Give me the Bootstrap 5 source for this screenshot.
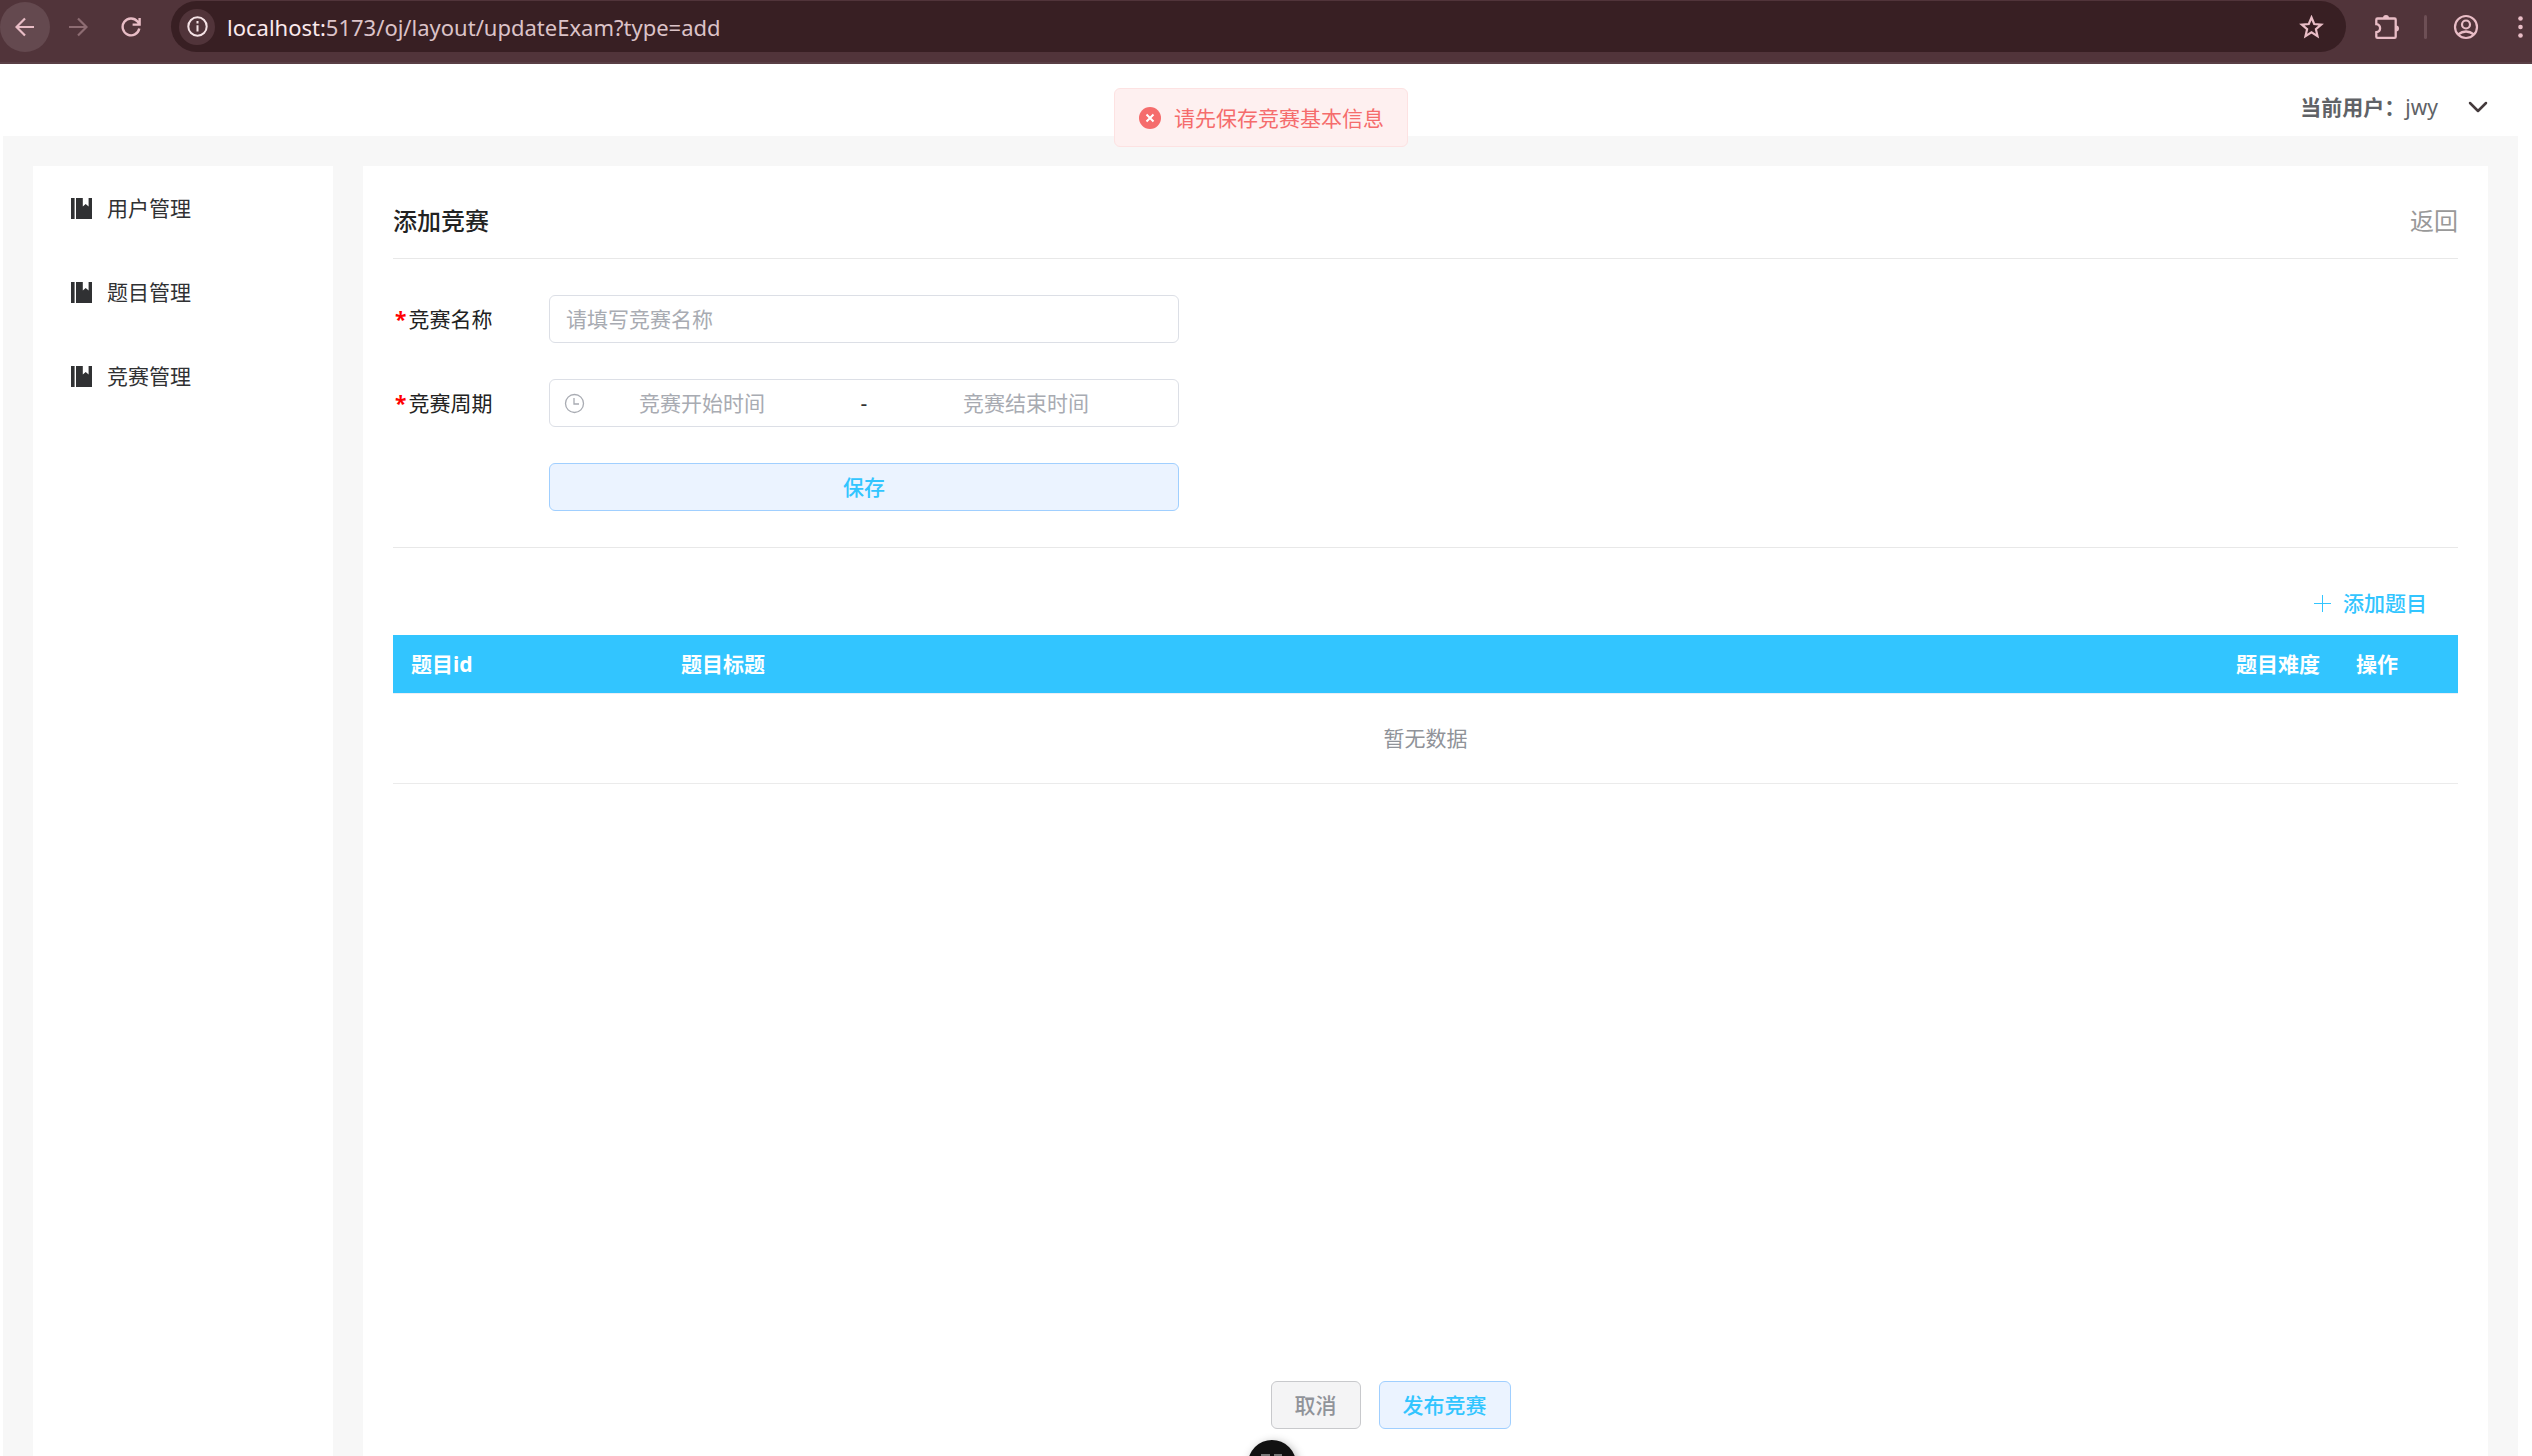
<!DOCTYPE html>
<html lang="zh-CN">
<head>
<meta charset="utf-8">
<title>添加竞赛</title>
<meta name="viewport" content="width=device-width, initial-scale=1">
<link href="https://cdn.jsdelivr.net/npm/bootstrap@5.3.0/dist/css/bootstrap.min.css" rel="stylesheet">
<style>
body{font-family:"Noto Sans","Noto Sans CJK SC",sans-serif;font-size:21px;line-height:30px;color:#222;background:#fff}
svg{display:block;flex:none}
.chrome-bar{height:64px;padding:2px 0 11px;background:#51343a;border-bottom:2px solid #593f45;color:#e9bdc6}
.chrome-nav{gap:3px;padding-right:15px}
.chrome-btn{width:50px;height:50px;border:0;border-radius:50%;background:none;color:inherit;padding:0}
.chrome-btn.active-nav{background:#64494f}
.chrome-btn:disabled{color:#8d6c72}
.chrome-tools{padding:0 9px 0 28px}
.tool-profile{margin:0 39px 0 26px}
.url-pill{height:51px;border-radius:26px;background:#381f23;padding:0 22px 0 8px}
.info-dot{width:36px;height:36px;border-radius:50%;background:#51343a;color:#f5e3e6}
.url-text{color:#fbe9ec;font-size:22px}
.url-text span{color:#dcc3c8}
.split{width:3px;height:24px;border-radius:2px;background:#6d4f55}
.top-header{height:72px;padding:14px 40px 0 0}
.user-menu{border:0;background:none;color:#606266;padding:0;height:58px}
.workspace{background:#f7f7f7;margin:0 14px 0 3px;padding:30px 30px 0;gap:30px}
.side-nav{width:300px}
.side-nav a{height:84px;padding-left:38px;gap:15px;color:#303133}
.panel-main{padding:30px 30px 27px}
.panel-head{height:63px;padding-bottom:13px;font-size:24px;line-height:36px;border-bottom:1px solid #e8e8e8}
.panel-head h1{font-size:24px;line-height:36px}
.panel-head a{color:#999}
.exam-form{padding:36px 0;row-gap:36px;border-bottom:1px solid #e8e8e8}
.field-label{width:156px}
.field-label span{color:#f00;font-weight:700;margin:0 2px}
.field-box{width:630px;height:48px;border:1px solid #dcdfe6;border-radius:6px;font-size:21px;color:#606266}
input.field-box{padding:0 16px}
.field-box input{border:0;background:none;text-align:center;width:234px;padding:0}
input::placeholder{color:#a8abb2;opacity:1}
.range-box{padding:0 0 0 14px;color:#303133}
.range-end{width:35px}
.tone-btn{height:48px;border:1px solid #a0cfff;border-radius:6px;background:#ebf3ff;color:#32c5ff;font-weight:500;font-size:21px;line-height:30px;padding:8px 23px}
.tone-btn.grey{background:#f4f4f5;border-color:#c8c9cc;color:#909399}
.field-save{width:630px}
.add-row{padding:31px 0 8px}
.add-link{border:0;background:none;color:#32c5ff;font-weight:500;padding:0 31px 0 0;height:48px;gap:12px}
.q-table{table-layout:fixed;width:100%}
.q-table th{height:58px;padding:0 18px;background:#32c5ff;color:#fff;font-weight:700}
.q-table td{height:90px;text-align:center;color:#909399;border-top:1px solid #ebeef5;border-bottom:1px solid #ebebeb}
.c-id{width:270px}
.c-lv{width:120px}
.foot-actions{gap:18px;padding-right:70px}
.toast-msg{left:50%;top:88px;transform:translateX(-50%);height:59px;margin-left:-5px;padding:0 23px 0 24px;background:#fef0f0;border:1px solid #fde2e2;border-radius:6px;color:#f56c6c;gap:13px;white-space:nowrap}
.float-dot{left:50%;top:1440px;margin-left:-18px;width:48px;height:48px;border-radius:50%;background:#111;box-shadow:2px 2px 10px rgba(0,0,0,.3)}
</style>
<script src="https://cdn.jsdelivr.net/npm/bootstrap@5.3.0/dist/js/bootstrap.bundle.min.js"></script>
</head>
<body class="vh-100 overflow-hidden d-flex flex-column position-relative">
<svg class="d-none"><symbol id="book" viewBox="0 0 21 21"><path fill="currentColor" d="M0 0h3.600v21H0zM5 0h6.800v8.500l2.900-2.500 2.900 2.500V0H21v21H5z"/></symbol></svg>

<header class="chrome-bar d-flex align-items-center flex-shrink-0">
  <div class="chrome-nav d-flex">
    <button class="chrome-btn active-nav d-grid" aria-label="后退"><svg class="m-auto" width="20" height="20" viewBox="0 0 20 20" fill="none" stroke="currentColor" stroke-width="2.200"><path d="M19 10H2M10 1.500 1.500 10l8.500 8.500"/></svg></button>
    <button class="chrome-btn d-grid" disabled aria-label="前进"><svg class="m-auto" width="20" height="20" viewBox="0 0 20 20" fill="none" stroke="currentColor" stroke-width="2.200"><path d="M1 10h17M10 1.500l8.500 8.500-8.500 8.500"/></svg></button>
    <button class="chrome-btn d-grid" aria-label="刷新"><svg class="m-auto" width="20" height="20" viewBox="0 0 20 20" fill="none" stroke="currentColor" stroke-width="2.400"><path d="M18.300 11.500A8.400 8.400 0 1 1 16.500 4.500L18.500 7M18.600 1v6.600h-7"/></svg></button>
  </div>
  <div class="url-pill d-flex align-items-center flex-grow-1">
    <div class="info-dot d-grid"><svg class="m-auto" width="21" height="21" viewBox="0 0 21 21" fill="none" stroke="currentColor" stroke-width="2"><circle cx="10.500" cy="10.500" r="9.200"/><path d="M10.500 9.200v6.300M10.500 5v2.400"/></svg></div>
    <div class="url-text flex-grow-1 ms-2 ps-1">localhost:<span>5173/oj/layout/updateExam?type=add</span></div>
    <svg width="25" height="24" viewBox="0 0 25 24" fill="none" stroke="currentColor" stroke-width="2.200"><path d="m12.500 2.500 2.700 6.500 7 .6-5.300 4.600 1.600 6.900-6-3.700-6 3.700 1.600-6.900L2.800 9.600l7-.6z"/></svg>
  </div>
  <div class="chrome-tools d-flex align-items-center">
    <svg width="26" height="26" viewBox="0 0 26 26" fill="none" stroke="currentColor" stroke-width="2.300"><path d="M3.500 4.500h17q1.200 0 1.200 1.200v17q0 1.200-1.200 1.200h-17q-1.200 0-1.200-1.200v-4.500q3.800-.6 3.800-4t-3.800-4V5.700q0-1.200 1.200-1.200z"/><path fill="currentColor" stroke="none" d="M9 4a3 3 0 0 1 6 0zM22 11.500a3 3 0 0 1 0 6z"/></svg>
    <div class="split ms-4"></div>
    <svg class="tool-profile" width="26" height="26" viewBox="0 0 26 26" fill="none" stroke="currentColor" stroke-width="2.200"><circle cx="13" cy="13" r="11"/><circle cx="13" cy="10.500" r="4"/><path d="M5 20.500q8-6 16 0"/></svg>
    <svg width="5" height="22" viewBox="0 0 5 22" fill="currentColor"><circle cx="2.500" cy="2.500" r="2.300"/><circle cx="2.500" cy="11" r="2.300"/><circle cx="2.500" cy="19.500" r="2.300"/></svg>
  </div>
</header>

<div class="top-header d-flex justify-content-end flex-shrink-0">
  <button class="user-menu d-flex align-items-center"><b>当前用户：</b>jwy<svg class="ms-4" width="30" height="18" viewBox="0 0 30 18" fill="none" stroke="#443a3c" stroke-width="2.500" stroke-linecap="round" stroke-linejoin="round"><path d="m8 5 8 8 8-8"/></svg></button>
</div>

<div class="workspace d-flex flex-grow-1 overflow-hidden">
  <nav class="side-nav bg-white flex-shrink-0">
    <a href="#" class="d-flex align-items-center text-decoration-none"><svg width="21" height="21"><use href="#book"/></svg>用户管理</a>
    <a href="#" class="d-flex align-items-center text-decoration-none"><svg width="21" height="21"><use href="#book"/></svg>题目管理</a>
    <a href="#" class="d-flex align-items-center text-decoration-none"><svg width="21" height="21"><use href="#book"/></svg>竞赛管理</a>
  </nav>
  <main class="panel-main bg-white flex-grow-1 d-flex flex-column">
    <div class="panel-head d-flex justify-content-between align-items-center">
      <h1 class="m-0 fw-medium">添加竞赛</h1><a href="#" class="text-decoration-none">返回</a>
    </div>
    <form class="exam-form d-grid">
      <div class="d-flex align-items-center"><label class="field-label" for="exam-name"><span>*</span>竞赛名称</label><input id="exam-name" class="field-box" placeholder="请填写竞赛名称"></div>
      <div class="d-flex align-items-center"><label class="field-label" for="exam-start"><span>*</span>竞赛周期</label>
        <div class="field-box range-box d-flex align-items-center">
          <svg width="21" height="21" viewBox="0 0 21 21" fill="none" stroke="#a8abb2" stroke-width="1.300"><circle cx="10.500" cy="10.500" r="9"/><path d="M10 5v6h5"/></svg>
          <input id="exam-start" placeholder="竞赛开始时间"><span class="flex-grow-1 text-center">-</span><input aria-label="竞赛结束时间" placeholder="竞赛结束时间"><span class="range-end"></span>
        </div>
      </div>
      <div class="d-flex"><span class="field-label"></span><button type="button" class="tone-btn field-save">保存</button></div>
    </form>
    <div class="add-row d-flex justify-content-end"><button class="add-link d-flex align-items-center"><svg width="17" height="17" viewBox="0 0 17 17" stroke="currentColor"><path d="M8.500 0v17M0 8.500h17"/></svg>添加题目</button></div>
    <table class="q-table">
      <thead><tr><th class="c-id">题目id</th><th>题目标题</th><th class="c-lv">题目难度</th><th class="c-lv">操作</th></tr></thead>
      <tbody><tr><td colspan="4">暂无数据</td></tr></tbody>
    </table>
    <div class="foot-actions d-flex justify-content-center mt-auto"><button class="tone-btn grey">取消</button><button class="tone-btn">发布竞赛</button></div>
  </main>
</div>
<div class="toast-msg position-absolute d-flex align-items-center" role="alert"><svg width="22" height="22" viewBox="0 0 22 22"><circle cx="11" cy="11" r="11" fill="#f56c6c"/><path d="m7.500 7.500 7 7m0-7-7 7" stroke="#fff" stroke-width="2"/></svg>请先保存竞赛基本信息</div>
<div class="float-dot position-absolute"><svg width="48" height="48" viewBox="0 0 48 48" fill="#777"><path d="M13 14h9v12h-9zM26 14h8v12h-8z"/></svg></div>
</body>
</html>
